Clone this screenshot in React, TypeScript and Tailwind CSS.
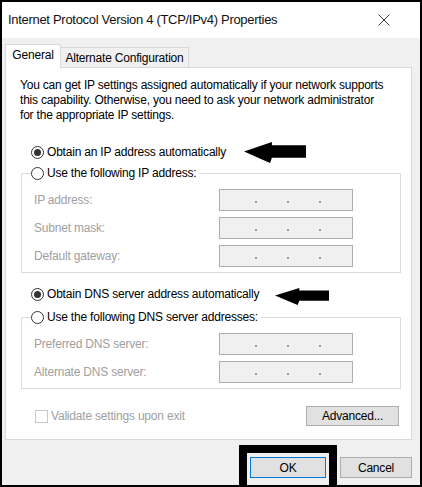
import React from "react";

const FONT = "font-['Liberation_Sans',Arial,sans-serif]";

const Radio: React.FC<{ checked?: boolean }> = ({ checked }) => (
  <span className="flex h-[13px] w-[13px] shrink-0 items-center justify-center rounded-full border border-[#333] bg-white">
    {checked && <span className="h-[7px] w-[7px] rounded-full bg-[#333]" />}
  </span>
);

const IpBox: React.FC = () => (
  <div className="flex h-[22px] w-[134px] items-center border border-[#adadad] bg-[#f0f0f0] pl-[35px]">
    <span className="h-[2px] w-[2px] bg-[#a0a0a0] translate-y-[2px]" />
    <span className="ml-[30px] h-[2px] w-[2px] bg-[#a0a0a0] translate-y-[2px]" />
    <span className="ml-[30px] h-[2px] w-[2px] bg-[#a0a0a0] translate-y-[2px]" />
  </div>
);

const FieldRow: React.FC<{ label: string }> = ({ label }) => (
  <div className="flex h-[22px] items-center">
    <span className="w-[197px] pl-[12px] text-[12px] text-[#a0a0a0]">{label}</span>
    <IpBox />
  </div>
);

const Group: React.FC<{ legend: string; fields: string[] }> = ({ legend, fields }) => (
  <fieldset className="ml-[15px] w-[380px] border border-[#dcdcdc] pb-[5px]">
    <legend className="ml-[9px] flex h-[16px] items-center gap-[3px] bg-white pr-[3px] text-[12px]">
      <Radio />
      <span>{legend}</span>
    </legend>
    <div className="mt-[8px] flex flex-col gap-[6px]">
      {fields.map((f) => (
        <FieldRow key={f} label={f} />
      ))}
    </div>
  </fieldset>
);

const Arrow: React.FC<{ className: string; w: number; h: number }> = ({ className, w, h }) => (
  <svg className={className} width={w} height={h} viewBox={`0 0 ${w} ${h}`}>
    <path
      d={`M0 ${h / 2 - 1} L${w * 0.45} 0 L${w * 0.45} ${h * 0.15} L${w} ${h * 0.15} L${w} ${h * 0.75} L${w * 0.45} ${h * 0.75} L${w * 0.42} ${h} Z`}
      fill="#000"
    />
  </svg>
);

export default function App() {
  return (
    <div className={`relative flex h-[487px] w-[422px] flex-col border-2 border-black bg-white ${FONT} tracking-[-0.2px] text-black`}>
      {/* title bar */}
      <div className="flex h-[36px] items-center justify-between bg-white pl-[6px] pr-[30px]">
        <span className="text-[13px] tracking-[-0.3px] text-[#111]">Internet Protocol Version 4 (TCP/IPv4) Properties</span>
        <svg width="12" height="12" viewBox="0 0 12 12">
          <path d="M0.5 0.5 L11.5 11.5 M11.5 0.5 L0.5 11.5" stroke="#333" strokeWidth="1" />
        </svg>
      </div>

      <div className="flex flex-1 flex-col bg-[#f0f0f0] pl-[3px] pr-[8px] pt-[6px]">
        {/* tabs */}
        <div className="flex items-end">
          <div className="relative z-10 -mb-px flex h-[24px] w-[56px] items-center justify-center border border-b-0 border-[#d9d9d9] bg-white pb-[3px] text-[12px]">
            General
          </div>
          <div className="flex h-[20px] w-[128px] items-center justify-center border border-b-0 border-l-0 border-[#d9d9d9] bg-[#f0f0f0] text-[12px]">
            Alternate Configuration
          </div>
        </div>

        {/* panel */}
        <div className="flex h-[373px] flex-col border border-[#d9d9d9] bg-white pt-[10px] text-[12px]">
          <p className="pl-[14px] leading-[15px]">
            You can get IP settings assigned automatically if your network supports
            <br />
            this capability. Otherwise, you need to ask your network administrator
            <br />
            for the appropriate IP settings.
          </p>

          <div className="mt-[21px] flex h-[16px] items-center gap-[3px] pl-[25px]">
            <Radio checked />
            <span>Obtain an IP address automatically</span>
          </div>

          <div className="mt-[5px]">
            <Group legend="Use the following IP address:" fields={["IP address:", "Subnet mask:", "Default gateway:"]} />
          </div>

          <div className="mt-[13px] flex h-[16px] items-center gap-[3px] pl-[25px]">
            <Radio checked />
            <span>Obtain DNS server address automatically</span>
          </div>

          <div className="mt-[7px]">
            <Group legend="Use the following DNS server addresses:" fields={["Preferred DNS server:", "Alternate DNS server:"]} />
          </div>

          <div className="mt-[17px] flex items-start justify-between pl-[29px] pr-[12px]">
            <div className="flex items-center gap-[3px] pt-[1px] text-[#a0a0a0]">
              <span className="h-[13px] w-[13px] border border-[#c8c8c8] bg-white" />
              <span>Validate settings upon exit</span>
            </div>
            <button className="h-[20px] w-[93px] border border-[#adadad] bg-[#e1e1e1] text-[12px]">Advanced...</button>
          </div>
        </div>

        {/* footer buttons */}
        <div className="flex justify-end gap-[14px] pt-[17px]">
          <button className="h-[21px] w-[76px] border border-[#0078d7] bg-[#e1e1e1] text-[12px]">OK</button>
          <button className="h-[21px] w-[72px] border border-[#adadad] bg-[#e1e1e1] text-[12px]">Cancel</button>
        </div>
      </div>

      {/* annotations */}
      <Arrow className="absolute left-[242px] top-[140px]" w={62} h={21} />
      <Arrow className="absolute left-[273px] top-[286px]" w={54} h={17} />
      <div className="absolute left-[237px] top-[443px] h-[44px] w-[98px] border-[8px] border-b-0 border-black" />
    </div>
  );
}
